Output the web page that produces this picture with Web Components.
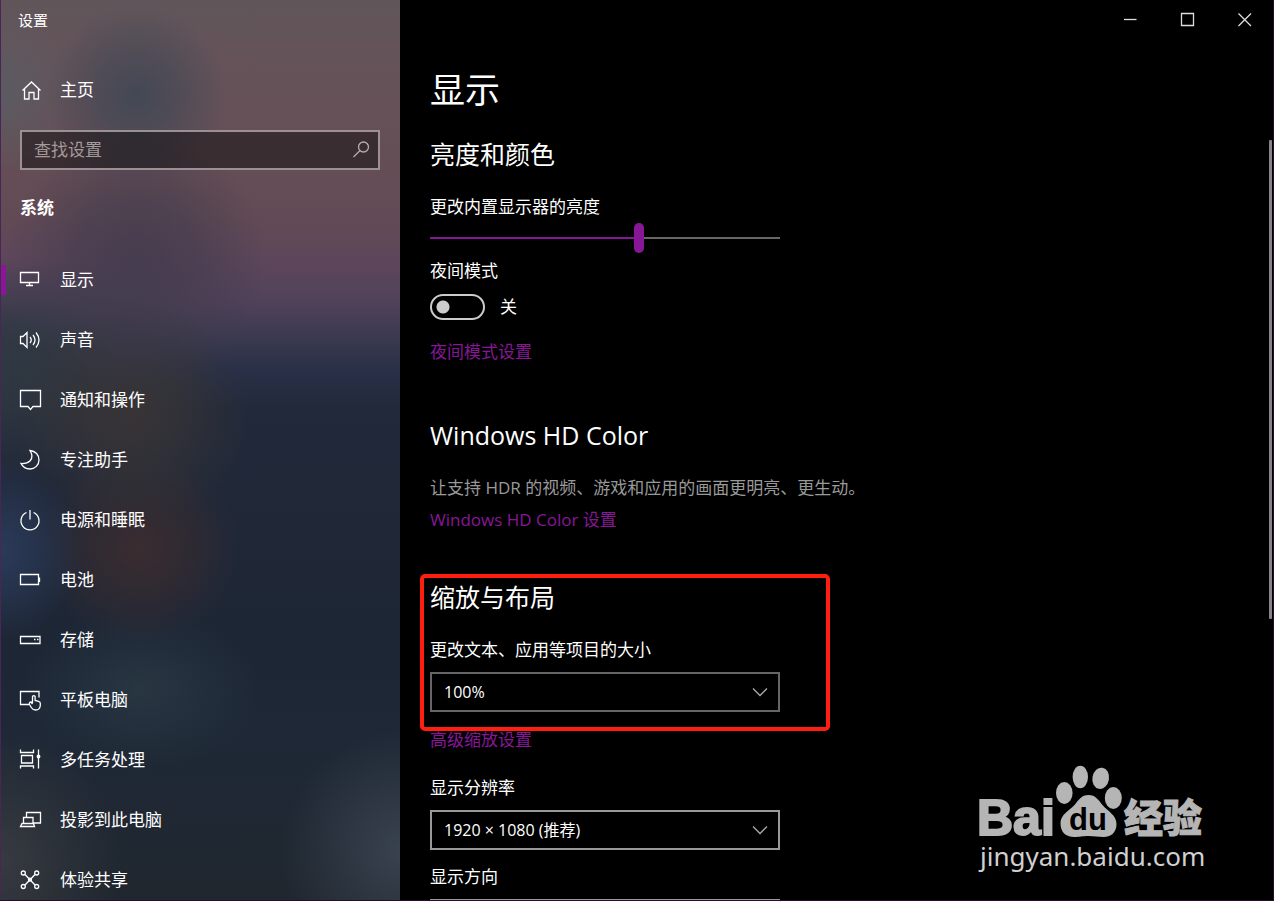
<!DOCTYPE html>
<html lang="zh-CN">
<head>
<meta charset="utf-8">
<title>设置</title>
<style>
  body {
    margin: 0;
    background: #000;
    color: #fff;
    font: 17px/24px "Open Sans", "Noto Sans CJK SC", sans-serif;
    --accent: #881798;
  }
</style>
</head>
<body>
<settings-window></settings-window>

<script>
const ICONS = {
  home: '<path d="M4.5 12.5 13.5 4l9 8.5M6.5 11v10H11v-6.5h5V21h4.5V11"/>',
  display: '<path d="M2.5 4.5h18v10h-18zM11.5 14.5V17M8 17.5h7"/>',
  sound: '<path d="M2.5 8.5H5l4-4v15l-4-4H2.5zM12 9q2.500 3 0 6M15 7q4 5 0 10M18 4.5q6 7.500 0 15"/>',
  notify: '<path d="M2.5 2.5h20v16H15l-2.500 3-2.500-3H2.5z"/>',
  moon: '<path d="M12 2.5C17.500 3 21 7 21 12S17 21 12 21C7.5 21 4.5 18.5 3 15.5C10 16 17.500 12 12 2.500z"/>',
  power: '<path d="M8.5 4.5A9 9 0 1 0 15.5 4.5M12 2v9.5"/>',
  battery: '<path d="M2.5 6.5h18v10h-18zM21.5 9.5V14"/>',
  storage: '<path d="M2.5 8.5H22v7H2.5zM16 11.5h1.5M19 11.5h1.5"/>',
  tablet: '<path d="M11 16.5H2.5v-13H21v6M14.5 15V8.5q1.3-1.8 2.6 0v4l3.5.8q1.7.5 1.7 2v2.2q-.5 4.5-4.5 4.5-3 0-4.5-2.5l-1.8-3q-.5-2.5 1.5-2.5l1.5 2"/>',
  multitask: '<path d="M2.5 1.5v3h13v-3M3.5 7.5h11V15h-11zM2.5 20.5V18h13v2.5M20.5 1.5v19"/><circle cx="20.5" cy="8.5" r="1.3" fill="currentColor"/>',
  project: '<path d="M8.5 9V4.500h14V15H15M5.5 9.5H15v6H5.5zM4 15.500h11.5l1 3h-14z"/>',
  share: '<circle cx="5.3" cy="5" r="2"/><circle cx="18.7" cy="5" r="2"/><circle cx="5.3" cy="18.5" r="2"/><circle cx="18.7" cy="18.5" r="2"/><path d="M7 6.500 17 17M17 6.5 7 17"/><circle cx="12" cy="11.7" r="1.5"/>',
  search: '<circle cx="14.5" cy="9" r="5"/><path d="M11 12.5 4.5 19"/>',
  chevron: '<path d="m5 8.5 7 7 7-7"/>',
  minimize: '<path d="M5 11.5h12.5"/>',
  maximize: '<path d="M5.5 5.500h12v12h-12z"/>',
  close: '<path d="m5.5 5.5 12.5 12.5M18 5.5 5.5 18"/>',
};

function template(html) {
  const el = document.createElement('template');
  el.innerHTML = html;
  return el;
}

class BaseElement extends HTMLElement {
  constructor() {
    super();
    this.root = this.attachShadow({ mode: 'open' });
    this.root.appendChild(this.constructor.template.content.cloneNode(true));
  }

  $(selector) {
    return this.root.querySelector(selector);
  }
}

class LineIcon extends BaseElement {
  static observedAttributes = ['name'];

  static template = template(`
    <style>
      :host { display: block; width: 24px; height: 24px; flex: none; }
      svg { display: block; fill: none; stroke: currentColor; stroke-width: 1.3; }
    </style>
    <svg width="24" height="24" viewBox="0 0 24 24" aria-hidden="true"></svg>
  `);

  attributeChangedCallback() {
    this.$('svg').innerHTML = ICONS[this.getAttribute('name')] || '';
  }
}

class NavItem extends BaseElement {
  static template = template(`
    <style>
      :host { display: block; flex: none; }
      a {
        display: flex;
        align-items: center;
        gap: 18px;
        height: 60px;
        padding-left: 17px;
        color: #fff;
        text-decoration: none;
        position: relative;
      }
      :host([selected]) a::before {
        content: "";
        position: absolute;
        left: -1px;
        top: 15px;
        width: 6px;
        height: 30px;
        background: var(--accent);
      }
    </style>
    <a href="#"><line-icon></line-icon><slot></slot></a>
  `);

  connectedCallback() {
    this.$('line-icon').setAttribute('name', this.getAttribute('icon'));
  }
}

class SettingsNav extends BaseElement {
  static template = template(`
    <style>
      :host {
        display: flex;
        flex-direction: column;
        box-sizing: border-box;
        width: 400px;
        flex: none;
        overflow: hidden;
        border-left: 1px solid #4a2656;
        background:
          radial-gradient(ellipse 90px 90px at 135px 95px, #434855, #434855a0 45%, #43485500),
          radial-gradient(ellipse 130px 130px at 135px 260px, #403a4cd0, #403a4c90 45%, #403a4c00),
          radial-gradient(ellipse 80px 80px at 0 90px, #5b5b62, #5b5b6200),
          radial-gradient(ellipse 120px 110px at 130px 415px, #383436, #38343690 50%, #38343600),
          radial-gradient(ellipse 80px 90px at 0 550px, #2a3a58, #2a3a5890 50%, #2a3a5800),
          radial-gradient(ellipse 100px 95px at 138px 548px, #3a2c2f, #3a2c2f90 50%, #3a2c2f00),
          radial-gradient(ellipse 120px 80px at 140px 690px, #283642, #28364200),
          radial-gradient(ellipse 120px 130px at 0 860px, #373a40, #373a4000),
          radial-gradient(ellipse 120px 120px at 400px 850px, #39424f, #39424f00),
          radial-gradient(ellipse 220px 110px at 0 370px, #2f3841, #2f3841b0 40%, #2f384100),
          linear-gradient(#60565a, #655359 60px, #654f56 150px, #634b55 215px, #5d465a 260px, #51425a 300px, #3c3a50 335px, #293047 370px, #21293a 410px, #202838 520px, #1d2635 650px, #1e2836 740px, #20272f);
      }
      .caption { padding: 8px 17px; font-size: 15px; }
      .home { margin-top: 20px; }
      .search {
        display: flex;
        flex: none;
        align-items: center;
        box-sizing: border-box;
        height: 40px;
        margin: 10px 20px 0 19px;
        padding: 0 5px 0 12px;
        border: 2px solid #9c9093;
        background: #0000006b;
        color: #b5adaf;
      }
      input {
        flex: 1;
        min-width: 0;
        padding: 0;
        border: 0;
        outline: 0;
        background: none;
        color: #fff;
        font: inherit;
      }
      input::placeholder { color: #a39a9c; opacity: 1; }
      h2 { margin: 26px 19px 30px; font-size: 17px; line-height: 24px; font-weight: 700; }
      nav { display: flex; flex-direction: column; }
    </style>
    <div class="caption">设置</div>
    <nav-item class="home" icon="home">主页</nav-item>
    <label class="search">
      <input type="text" placeholder="查找设置" aria-label="查找设置">
      <line-icon name="search"></line-icon>
    </label>
    <h2>系统</h2>
    <nav>
      <nav-item icon="display" selected>显示</nav-item>
      <nav-item icon="sound">声音</nav-item>
      <nav-item icon="notify">通知和操作</nav-item>
      <nav-item icon="moon">专注助手</nav-item>
      <nav-item icon="power">电源和睡眠</nav-item>
      <nav-item icon="battery">电池</nav-item>
      <nav-item icon="storage">存储</nav-item>
      <nav-item icon="tablet">平板电脑</nav-item>
      <nav-item icon="multitask">多任务处理</nav-item>
      <nav-item icon="project">投影到此电脑</nav-item>
      <nav-item icon="share">体验共享</nav-item>
    </nav>
  `);
}

class WindowControls extends BaseElement {
  static template = template(`
    <style>
      :host { display: flex; justify-content: flex-end; height: 40px; flex: none; }
      button {
        display: flex;
        align-items: center;
        justify-content: center;
        width: 57px;
        padding: 0;
        border: 0;
        background: none;
        color: #ddd;
      }
    </style>
    <button type="button" aria-label="最小化"><line-icon name="minimize"></line-icon></button>
    <button type="button" aria-label="最大化"><line-icon name="maximize"></line-icon></button>
    <button type="button" aria-label="关闭"><line-icon name="close"></line-icon></button>
  `);
}

class SettingsSection extends BaseElement {
  static template = template(`
    <style>
      :host { display: block; position: relative; }
      h2 { margin: 0 0 24px; font-size: 25px; line-height: 34px; font-weight: 400; }
      :host([marked])::after {
        content: "";
        position: absolute;
        inset: -6px auto -19px -10px;
        width: 402px;
        border: 4px solid #ff1e0f;
        border-radius: 5px;
        pointer-events: none;
      }
    </style>
    <h2></h2>
    <slot></slot>
  `);

  connectedCallback() {
    this.$('h2').textContent = this.getAttribute('heading');
  }
}

class SettingsLink extends BaseElement {
  static template = template(`
    <style>
      :host { display: block; }
      a { color: var(--accent); text-decoration: none; }
    </style>
    <a href="#"><slot></slot></a>
  `);
}

class SliderField extends BaseElement {
  static template = template(`
    <style>
      :host { display: block; max-width: 350px; }
      label { display: block; }
      input {
        display: block;
        width: 100%;
        height: 30px;
        margin: 4px 0 0;
        appearance: none;
        background: linear-gradient(90deg, var(--accent) 60%, #666 60%) center / 100% 2px no-repeat;
      }
      input::-webkit-slider-thumb {
        appearance: none;
        width: 10px;
        height: 30px;
        border-radius: 5px;
        background: var(--accent);
      }
    </style>
    <label for="range"><slot></slot></label>
    <input id="range" type="range" min="0" max="100" value="60">
  `);
}

class ToggleField extends BaseElement {
  static template = template(`
    <style>
      :host { display: block; }
      label { display: block; }
      .row { display: flex; align-items: center; gap: 15px; margin-top: 11px; height: 26px; }
      input {
        appearance: none;
        box-sizing: border-box;
        width: 55px;
        height: 26px;
        margin: 0;
        border: 2px solid #ccc;
        border-radius: 13px;
        background: radial-gradient(circle at 11px 11px, #ccc 6px, #0000 7px);
      }
    </style>
    <label for="toggle"><slot></slot></label>
    <div class="row"><input id="toggle" type="checkbox" role="switch"><span>关</span></div>
  `);
}

class SelectField extends BaseElement {
  static template = template(`
    <style>
      :host { display: block; max-width: 350px; --line: #666; }
      :host([active]) { --line: #999; }
      label { display: block; margin-bottom: 10px; }
      .box { display: grid; align-items: center; color: #aaa; }
      select, line-icon { grid-area: 1 / 1; }
      line-icon { justify-self: end; margin-right: 8px; pointer-events: none; }
      select {
        appearance: none;
        box-sizing: border-box;
        width: 100%;
        height: 40px;
        padding: 0 40px 0 12px;
        border: 2px solid var(--line);
        border-radius: 0;
        background: #000;
        color: #fff;
        font: inherit;
        font-size: 16px;
      }
    </style>
    <label for="select"><slot></slot></label>
    <div class="box">
      <select id="select"><option></option></select>
      <line-icon name="chevron"></line-icon>
    </div>
  `);

  connectedCallback() {
    this.$('option').textContent = this.getAttribute('value');
  }
}

class BaiduMark extends BaseElement {
  static template = template(`
    <style>
      :host { display: block; }
      svg { display: block; fill: #b5b5b5; }
      .bold { font-family: "Liberation Sans", sans-serif; font-weight: 700; }
      .cjk { font-family: "Noto Sans CJK SC", sans-serif; font-weight: 900; }
      .url { font-family: "Noto Sans", sans-serif; fill: #d0d0d0; }
    </style>
    <svg width="240" height="116" viewBox="0 0 240 116">
      <text class="bold" x="7" y="75" font-size="50" stroke="#b5b5b5" stroke-width="2">Bai</text>
      <ellipse cx="94.3" cy="33" rx="8.3" ry="11"/>
      <ellipse cx="110.3" cy="17" rx="7.7" ry="11.3"/>
      <ellipse cx="130.7" cy="18.3" rx="8.3" ry="10.7" transform="rotate(10 130.7 18.3)"/>
      <ellipse cx="143.3" cy="38" rx="8.5" ry="11"/>
      <path d="M118.5 35c7 0 10 5 14 10 5 6 14 10 14 19 0 9-6 13-13 13-6 0-9-1-15-1s-9 1-14 1c-9 0-14-5-14-14 0-8 8-12 14-18 4-5 7-10 14-10z"/>
      <text class="bold" x="99" y="70" font-size="31" fill="#000">du</text>
      <text class="cjk" x="154" y="72" font-size="39" stroke="#b5b5b5">经验</text>
      <text class="url" x="10" y="106" font-size="26">jingyan.baidu.com</text>
    </svg>
  `);
}

class SettingsWindow extends BaseElement {
  static template = template(`
    <style>
      :host {
        display: flex;
        position: relative;
        box-sizing: border-box;
        height: 100vh;
        overflow: hidden;
        border: solid #2b0a30;
        border-width: 0 1px 1px 0;
      }
      .pane { flex: 1; min-width: 0; display: flex; flex-direction: column; }
      .view { flex: 1; min-height: 0; display: flex; }
      main { flex: 1; min-width: 0; overflow: hidden; padding: 26px 30px 0; }
      .track { width: 3px; margin: 100px 1px 0 0; }
      .thumb { height: 63%; background: #858585; border-radius: 1px; }
      h1 { margin: 0 0 23px; font-size: 35px; line-height: 48px; font-weight: 400; }
      p { margin: 0 0 8px; color: #999; }
      toggle-field { margin-top: 6px; }
      .night { margin: 20px 0 54px; }
      .hd { margin-bottom: 48px; }
      .advanced { margin: 16px 0 24px; }
      .resolution { margin-bottom: 15px; }
      baidu-mark { position: absolute; right: 63px; bottom: 24px; }
    </style>
    <settings-nav></settings-nav>
    <div class="pane">
      <window-controls></window-controls>
      <div class="view">
        <main>
          <h1>显示</h1>
          <settings-section heading="亮度和颜色">
            <slider-field>更改内置显示器的亮度</slider-field>
            <toggle-field>夜间模式</toggle-field>
          </settings-section>
          <settings-link class="night">夜间模式设置</settings-link>
          <settings-section heading="Windows HD Color">
            <p>让支持 HDR 的视频、游戏和应用的画面更明亮、更生动。</p>
          </settings-section>
          <settings-link class="hd">Windows HD Color 设置</settings-link>
          <settings-section heading="缩放与布局" marked>
            <select-field value="100%">更改文本、应用等项目的大小</select-field>
          </settings-section>
          <settings-link class="advanced">高级缩放设置</settings-link>
          <select-field class="resolution" value="1920 × 1080 (推荐)" active>显示分辨率</select-field>
          <select-field value="横向" active>显示方向</select-field>
        </main>
        <div class="track"><div class="thumb"></div></div>
      </div>
    </div>
    <baidu-mark></baidu-mark>
  `);
}

customElements.define('line-icon', LineIcon);
customElements.define('nav-item', NavItem);
customElements.define('settings-nav', SettingsNav);
customElements.define('window-controls', WindowControls);
customElements.define('settings-section', SettingsSection);
customElements.define('settings-link', SettingsLink);
customElements.define('slider-field', SliderField);
customElements.define('toggle-field', ToggleField);
customElements.define('select-field', SelectField);
customElements.define('baidu-mark', BaiduMark);
customElements.define('settings-window', SettingsWindow);
</script>
</body>
</html>
